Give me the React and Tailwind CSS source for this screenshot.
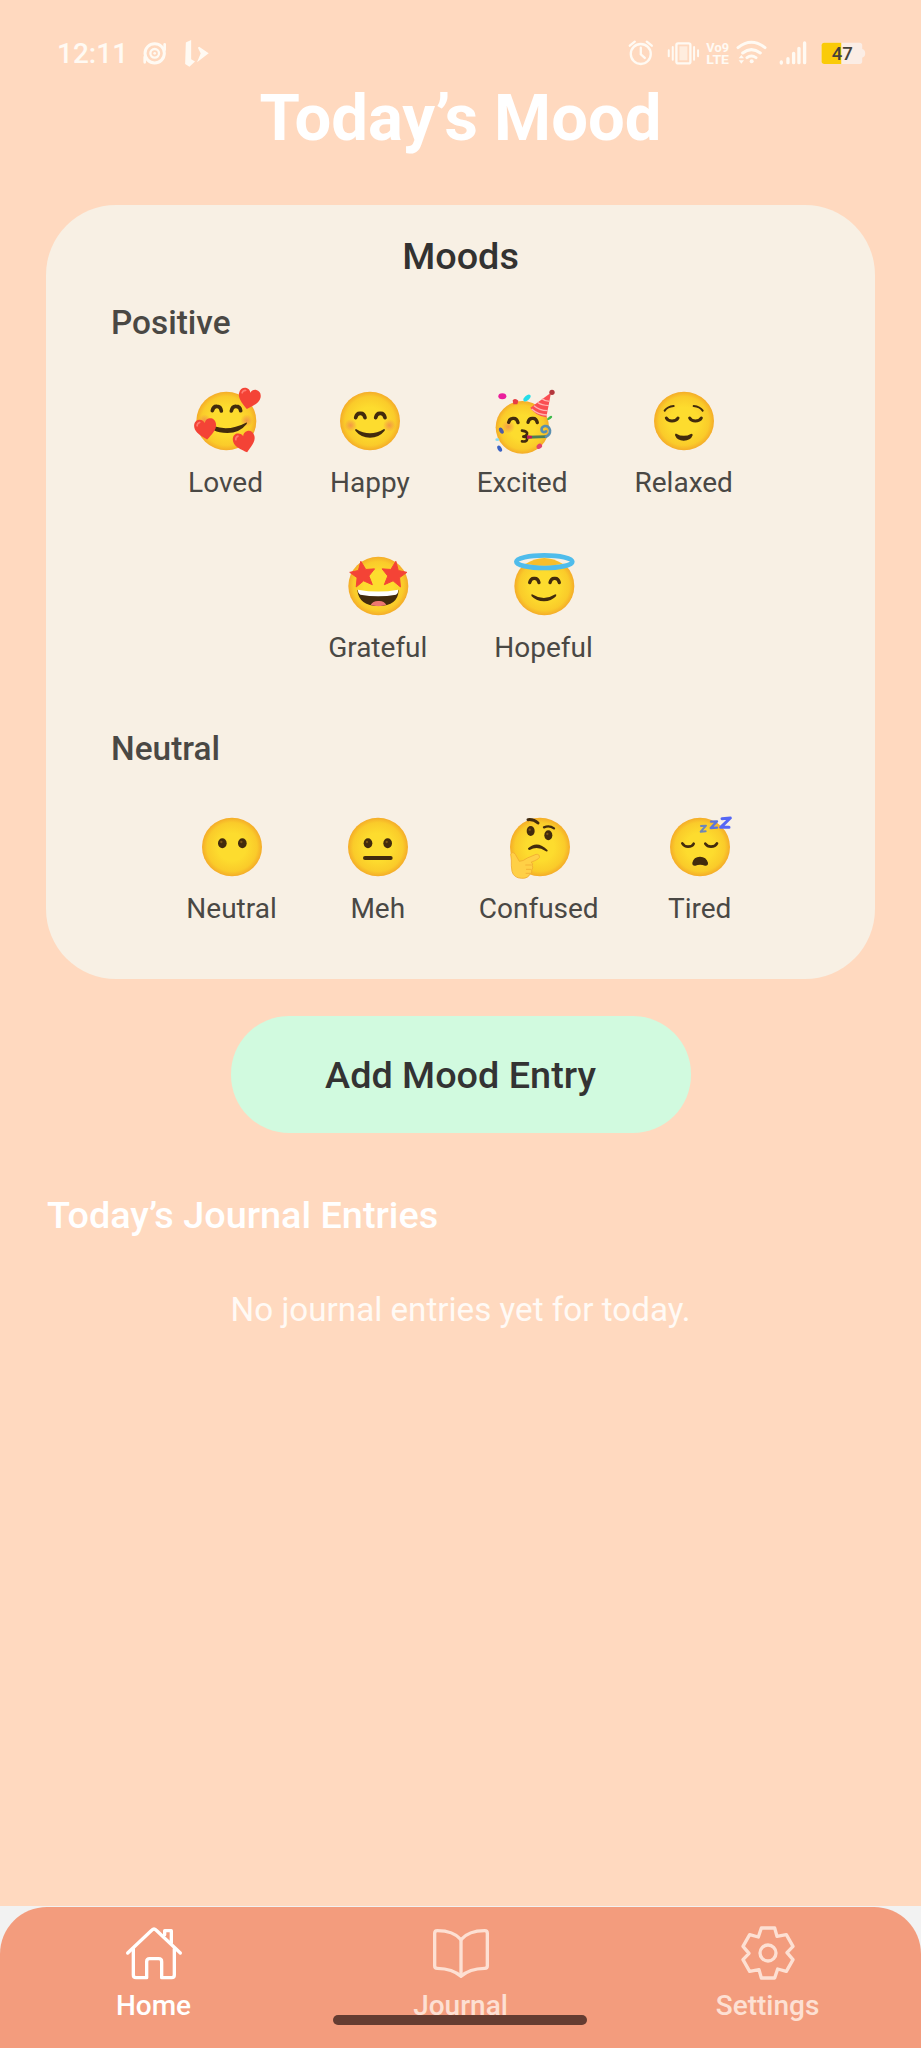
const INK = "#422B0D";

function Face({ cx, cy, rx = 90, ry = 88 }) {
  return <ellipse cx={cx} cy={cy} rx={rx} ry={ry} fill="url(#face)" />;
}

function Stroke({ d, w = 8, color = INK }) {
  return <path d={d} fill="none" stroke={color} strokeWidth={w} strokeLinecap="round" strokeLinejoin="round" />;
}

function Blush({ cx, cy, r = 19 }) {
  return <circle cx={cx} cy={cy} r={r} fill="url(#blush)" />;
}

function Heart({ x, y, rotate, scale = 1 }) {
  return (
    <g transform={`translate(${x} ${y}) rotate(${rotate}) scale(${scale})`}>
      <path
        d="M0 31 C-14 19 -33 6 -33 -11 C-33 -24 -25 -31 -16 -31 C-8 -31 -2 -26 0 -19 C2 -26 8 -31 16 -31 C25 -31 33 -24 33 -11 C33 6 14 19 0 31Z"
        fill="#F44336"
      />
      <path d="M-24 -14 Q-23 -22 -15 -23" fill="none" stroke="#FF7A70" strokeWidth="5" strokeLinecap="round" />
    </g>
  );
}

function Star({ x, y, rotate }) {
  return (
    <path
      transform={`translate(${x} ${y}) rotate(${rotate}) scale(0.94)`}
      d="M0 -42 L12 -14 L40 -12 L19 8 L26 37 L0 21 L-26 37 L-19 8 L-40 -12 L-12 -14Z"
      fill="#F44336"
      stroke="#F44336"
      strokeWidth="3"
      strokeLinejoin="round"
    />
  );
}

function Emoji({ box, children }) {
  return (
    <svg viewBox={box} className="h-[70px] w-[70px] overflow-visible" aria-hidden="true">
      {children}
    </svg>
  );
}

const loved = (
  <Emoji box="89 48 210 210">
    <Face cx={195} cy={153} />
    <Blush cx={256} cy={152} />
    <Blush cx={130} cy={152} />
    <Stroke d="M153 122 Q156 108 167 109 Q178 109 180 123" w={11} />
    <Stroke d="M210 123 Q213 108 224 109 Q236 109 238 122" w={11} />
    <path d="M158 169 Q205 184 254 158 Q259 157 256 162 Q235 189 198 189 Q172 189 158 181Z" fill={INK} />
    <Heart x={263} y={87} rotate={12} scale={1} />
    <Heart x={133} y={178} rotate={-8} scale={1} />
    <Heart x={250} y={217} rotate={-14} scale={1} />
  </Emoji>
);

const happy = (
  <Emoji box="525 48 210 210">
    <Face cx={630} cy={153} />
    <Blush cx={572} cy={166} />
    <Blush cx={688} cy={166} />
    <Stroke d="M587 143 Q590 129 601 130 Q612 129 615 143" w={11} />
    <Stroke d="M647 143 Q650 129 661 130 Q672 129 675 143" w={11} />
    <path d="M588 177 Q630 203 672 177 Q677 177 674 182 Q657 203 630 203 Q603 203 586 182 Q584 177 588 177Z" fill={INK} />
  </Emoji>
);

const excited = (
  <Emoji box="111 48 210 210">
    <Face cx={217} cy={172} rx={80} ry={79} />
    <Blush cx={175} cy={170} r={20} />
    <Stroke d="M176 157 Q179 144 190 145 Q201 144 204 158" w={10} />
    <Stroke d="M234 157 Q237 144 248 145 Q259 144 262 158" w={10} />
    <Stroke d="M216 182 Q234 184 231 192 Q230 198 220 200 Q235 201 231 209 Q228 216 216 214" w={8} />
    <path d="M231 197 L288 196 L288 204 L231 206Z" fill="#4E7D55" />
    <path d="M231 196 L246 198 V205 L231 206Z" fill="#C2185B" />
    <Stroke d="M288 200 Q301 194 300 181 Q297 167 284 168 Q273 171 275 182 Q279 190 288 184" w={8} color="#5A8FB0" />
    <path d="M241 113 Q256 137 289 142 L303 68Z" fill="#FA4E52" />
    <path d="M262 97 Q274 106 297 107 M252 107 Q268 121 293 122 M245 117 Q264 134 291 135 M276 86 Q285 94 299 94" fill="none" stroke="#FFB3B0" strokeWidth="4" />
    <circle cx="306" cy="67" r="8" fill="#B3373C" />
    <ellipse cx="157" cy="79" rx="12" ry="9" fill="#EA1E9C" />
    <ellipse cx="231" cy="84" rx="13" ry="7" transform="rotate(-42 231 84)" fill="#25DDE8" />
    <path d="M188 91 Q196 83 205 92 L202 103 H190Z" fill="#E83D43" />
    <ellipse cx="299" cy="144" rx="9" ry="4" transform="rotate(-35 299 144)" fill="#3DBB4B" />
    <ellipse cx="154" cy="182" rx="6" ry="10" transform="rotate(-30 154 182)" fill="#4B5CA8" />
    <ellipse cx="149" cy="236" rx="6" ry="10" transform="rotate(-30 149 236)" fill="#3B62C4" />
    <ellipse cx="142" cy="209" rx="6" ry="4" fill="#8ADBF0" />
    <ellipse cx="268" cy="229" rx="9" ry="7" transform="rotate(-40 268 229)" fill="#E2436B" />
  </Emoji>
);

const relaxed = (
  <Emoji box="600 48 210 210">
    <Face cx={705} cy={153} />
    <Stroke d="M647 122 Q655 110 674 108" w={6} />
    <Stroke d="M734 108 Q753 110 761 122" w={6} />
    <Stroke d="M652 144 Q657 153 669 153 Q682 153 687 144" w={9} />
    <Stroke d="M722 144 Q727 153 739 153 Q752 153 757 144" w={9} />
    <path d="M682 191 Q704 204 727 191 Q732 191 731 196 Q725 212 704 212 Q684 212 678 196 Q678 190 682 191Z" fill={INK} />
  </Emoji>
);

const grateful = (
  <Emoji box="128 63 210 210">
    <Face cx={234} cy={168} />
    <Star x={187} y={133} rotate={-8} />
    <Star x={281} y={133} rotate={8} />
    <path d="M171 181 Q234 202 295 181 Q293 228 234 228 Q176 228 171 181Z" fill={INK} />
    <path d="M173 179 Q234 190 293 179 Q295 189 287 194 Q234 204 180 194 Q172 189 173 179Z" fill="#fff" />
    <path d="M211 225 Q218 212 235 213 Q251 212 258 225 Q234 232 211 225Z" fill="#ED7770" />
  </Emoji>
);

const hopeful = (
  <Emoji box="624 63 210 210">
    <Face cx={730} cy={168} />
    <ellipse cx="730" cy="94" rx="73" ry="12" fill="#F8F0E4" />
    <path d="M673 102 Q730 66 786 102 Q730 112 673 102Z" fill="#F7BE2B" />
    <ellipse cx="730" cy="95" rx="84" ry="19" fill="none" stroke="#4FBCEB" strokeWidth="14" />
    <Stroke d="M686 158 Q689 144 700 145 Q711 144 714 158" w={10} />
    <Stroke d="M747 158 Q750 144 761 145 Q772 144 775 158" w={10} />
    <path d="M693 193 Q729 215 763 193 Q768 193 765 199 Q751 214 729 214 Q706 214 692 199 Q689 193 693 193Z" fill={INK} />
  </Emoji>
);

function Eye({ cx, cy, rx = 13, ry = 15 }) {
  return (
    <g>
      <ellipse cx={cx} cy={cy} rx={rx} ry={ry} fill={INK} />
      <circle cx={cx - 3} cy={cy - 4} r="3.500" fill="#7A5415" />
    </g>
  );
}

const neutral = (
  <Emoji box="110 36 210 210">
    <Face cx={215} cy={141} />
    <Eye cx={186} cy={130} />
    <Eye cx={246} cy={130} />
  </Emoji>
);

const meh = (
  <Emoji box="551 36 210 210">
    <Face cx={656} cy={141} />
    <Eye cx={626} cy={130} />
    <Eye cx={685} cy={130} />
    <Stroke d="M617 174 H694" w={12} />
  </Emoji>
);

const confused = (
  <Emoji box="162 36 210 210">
    <Face cx={270} cy={141} />
    <Eye cx={242} cy={93} rx={12} />
    <Eye cx={295} cy={106} rx={12} />
    <Stroke d="M234 59 Q251 57 264 69" w={9} />
    <Stroke d="M282 82 Q298 75 312 85" w={7} />
    <path d="M234 145 Q262 119 293 151 Q293 156 288 154 Q262 136 239 150 Q233 150 234 145Z" fill={INK} />
    <path
      d="M182 162 Q188 153 196 163 L208 184 Q219 184 232 174 L258 163 Q270 162 268 173 Q265 178 243 187 Q251 190 247 197 Q251 204 245 210 Q247 217 241 221 Q234 236 215 235 Q191 234 186 214 Q183 198 184 180Z"
      fill="#FFD046"
      stroke="#F1AC30"
      strokeWidth="2.500"
    />
    <path d="M226 195 H245 M228 208 H244 M227 220 H240" stroke="#F1AC30" strokeWidth="2.500" fill="none" />
  </Emoji>
);

const tired = (
  <Emoji box="645 36 210 210">
    <Face cx={750} cy={141} />
    <Stroke d="M697 130 Q703 140 714 140 Q727 140 731 131" w={8} />
    <Stroke d="M766 131 Q772 140 783 140 Q796 140 801 130" w={8} />
    <path d="M727 188 Q731 170 750 170 Q769 170 774 188 Q775 198 765 197 Q750 192 736 197 Q726 198 727 188Z" fill={INK} />
    <Stroke d="M753 78 L768 77 L752 95 L767 94" w={6} color="#6E86B8" />
    <Stroke d="M783 65 L801 64 L782 84 L801 83" w={7} color="#5C74DC" />
    <Stroke d="M816 56 L841 54 L812 82 L837 82" w={9} color="#5566F5" />
  </Emoji>
);

const positiveRows = [
  [
    { label: "Loved", art: loved },
    { label: "Happy", art: happy },
    { label: "Excited", art: excited },
    { label: "Relaxed", art: relaxed },
  ],
  [
    { label: "Grateful", art: grateful },
    { label: "Hopeful", art: hopeful },
  ],
];

const neutralRow = [
  { label: "Neutral", art: neutral },
  { label: "Meh", art: meh },
  { label: "Confused", art: confused },
  { label: "Tired", art: tired },
];

function MoodRow({ moods, gap = "gap-[67px]" }) {
  return (
    <div className={`flex justify-center ${gap}`}>
      {moods.map((m) => (
        <button key={m.label} className="flex flex-col items-center gap-[10px]">
          {m.art}
          <span className="text-[28px] leading-[33px] text-[#4a4844]">{m.label}</span>
        </button>
      ))}
    </div>
  );
}

function StatusBar() {
  return (
    <div className="flex h-[80px] items-center pt-[27px] pr-[42px] pl-[57px] text-[#fffaf3]">
      <span className="w-[71px] text-[28px] leading-[33px] font-medium">12:11</span>
      <svg viewBox="390 50 270 100" className="ml-[2px] h-[33.300px] w-[90px]" fill="none" stroke="currentColor" aria-hidden="true">
        <circle cx="464" cy="99" r="29" strokeWidth="9" />
        <circle cx="464" cy="99" r="13" strokeWidth="7" />
        <circle cx="464" cy="99" r="4" fill="currentColor" stroke="none" />
        <path d="M434 110 V126 M494 88 V72" strokeWidth="8" strokeLinecap="round" />
        <path d="M560 68 L571 63 V118 L581 124 L568 136 L558 130Z" fill="currentColor" strokeWidth="5" />
        <path d="M596 81 L622 99 L597 118 L605 99Z" fill="currentColor" strokeWidth="5" />
      </svg>
      <svg viewBox="60 50 780 100" className="ml-auto h-[33.300px] w-[260px]" fill="none" stroke="currentColor" aria-hidden="true">
        <circle cx="125" cy="101" r="30" strokeWidth="7" />
        <path d="M125 82 V102 L137 113 M92 76 L107 64 M143 64 L158 76" strokeWidth="7" strokeLinecap="round" />
        <rect x="232" y="69" width="42" height="60" rx="5" strokeWidth="7" />
        <rect x="241" y="78" width="24" height="42" fill="currentColor" fillOpacity="0.6" stroke="none" />
        <path d="M221 80 V118 M285 80 V118 M209 90 V108 M297 90 V108" strokeWidth="6" strokeLinecap="round" />
        <g fill="currentColor" stroke="none" fontFamily="Roboto, sans-serif" fontWeight="700">
          <text x="322" y="94" fontSize="36" textLength="68" lengthAdjust="spacingAndGlyphs">Vo9</text>
          <text x="322" y="132" fontSize="40" textLength="68" lengthAdjust="spacingAndGlyphs">LTE</text>
        </g>
        <path d="M417 82 Q457 50 498 82 M431 98 Q457 78 484 98 M444 112 Q457 102 471 112" strokeWidth="9" strokeLinecap="round" />
        <circle cx="458" cy="123" r="6" fill="currentColor" stroke="none" />
        <path d="M427 104 L435 114 H419Z M427 130 L435 120 H419Z" fill="currentColor" stroke="none" />
        <path d="M547 125 V128 M567 115 V127 M584 99 V127 M600 84 V127 M617 68 V127" strokeWidth="10" strokeLinecap="round" />
        <path d="M676 67 H782 Q790 67 790 75 V86 Q799 88 799 99 Q799 110 790 112 V123 Q790 131 782 131 H676 Q668 131 668 123 V75 Q668 67 676 67Z" fill="#FBEDE5" stroke="none" />
        <path d="M727 67 H676 Q668 67 668 75 V123 Q668 131 676 131 H727Z" fill="#FACB08" stroke="none" />
        <text x="730" y="119" textAnchor="middle" fontSize="56" fontWeight="500" fontFamily="Roboto, sans-serif" fill="#46433a" stroke="none">47</text>
      </svg>
    </div>
  );
}

const GEAR =
  "M-20 -75 L20 -75 L27 -50 L55 -55 L75 -20 L57 -1 L75 20 L55 55 L29 48 L20 75 L-20 75 L-27 50 L-55 55 L-75 20 L-57 1 L-75 -20 L-55 -55 L-29 -48Z";

function TabIcon({ box, children }) {
  return (
    <svg viewBox={box} className="h-[60px] w-[60px]" fill="none" stroke="currentColor" strokeWidth="10" strokeLinecap="round" strokeLinejoin="round" aria-hidden="true">
      {children}
    </svg>
  );
}

const tabs = [
  {
    label: "Home",
    color: "text-white",
    icon: (
      <TabIcon box="369 98 180 180">
        <path d="M380 188 L453 119 Q459 113 465 119 L538 188" />
        <path d="M397 176 V254 Q397 262 405 262 H437 V214 Q437 205 446 205 H473 Q482 205 482 214 V262 H512 Q520 262 520 254 V176" />
        <path d="M491 133 V121 H511 V157" />
      </TabIcon>
    ),
  },
  {
    label: "Journal",
    color: "text-[#fde0d3]",
    icon: (
      <TabIcon box="1291 98 180 180">
        <path d="M1381 148 Q1358 121 1310 121 Q1302 121 1302 129 V227 Q1302 234 1310 234 Q1356 235 1381 258 Q1406 235 1452 234 Q1460 234 1460 227 V129 Q1460 121 1452 121 Q1404 121 1381 148Z" />
        <path d="M1381 148 V256" />
      </TabIcon>
    ),
  },
  {
    label: "Settings",
    color: "text-[#fde0d3]",
    icon: (
      <TabIcon box="-90 -90 180 180">
        <path d={GEAR} />
        <circle r="24" />
      </TabIcon>
    ),
  },
];

export default function App() {
  return (
    <div className="relative flex h-[2048px] w-[921px] flex-col overflow-hidden bg-[#ffd9bf] font-[Roboto,sans-serif]">
      <svg className="absolute h-0 w-0" aria-hidden="true">
        <defs>
          <radialGradient id="face" cx="50%" cy="50%" r="52%">
            <stop offset="0.45" stopColor="#FDDC2E" />
            <stop offset="0.8" stopColor="#FACB2A" />
            <stop offset="1" stopColor="#F3A428" />
          </radialGradient>
          <radialGradient id="blush">
            <stop offset="0" stopColor="#F08A4B" stopOpacity="0.8" />
            <stop offset="1" stopColor="#F08A4B" stopOpacity="0" />
          </radialGradient>
        </defs>
      </svg>

      <StatusBar />
      <h1 className="text-center text-[65.200px] leading-[76px] font-bold text-white">Today’s Mood</h1>

      <main className="flex flex-1 flex-col px-[46px] pt-[49px]">
        <section className="h-[773.500px] rounded-[70px] bg-[#f8f0e4] pt-[29px]">
          <h2 className="text-center text-[37.800px] leading-[44px] font-medium text-[#333231]">Moods</h2>
          <h3 className="mt-[26px] pl-[65px] text-[33.400px] leading-[38px] font-medium text-[#4a4844]">Positive</h3>
          <div className="mt-[44px] flex flex-col gap-[52px]">
            {positiveRows.map((row) => (
              <MoodRow key={row[0].label} moods={row} />
            ))}
          </div>
          <h3 className="mt-[66px] mb-[44px] pl-[65px] text-[33.400px] leading-[38px] font-medium text-[#4a4844]">Neutral</h3>
          <MoodRow moods={neutralRow} gap="gap-[66px]" />
        </section>

        <button className="mt-[37.500px] h-[117px] w-[460px] self-center rounded-[58px] bg-[#d1fadf] text-[37.800px] leading-[44px] font-medium text-[#333]">
          Add Mood Entry
        </button>

        <h2 className="mt-[60px] pl-px text-[37.800px] leading-[44px] font-medium text-white">Today’s Journal Entries</h2>
        <p className="mt-[54px] text-center text-[33.200px] leading-[38px] text-[#fffaf5]">No journal entries yet for today.</p>
      </main>

      <div className="bg-[#f2f2f2] pt-px">
        <nav className="grid h-[141px] grid-cols-3 rounded-t-[47px] bg-[#f39c7d] pt-[16px]">
          {tabs.map((t) => (
            <a key={t.label} className={`flex flex-col items-center gap-[6px] ${t.color}`}>
              {t.icon}
              <span className="text-[28px] leading-[33px] font-medium">{t.label}</span>
            </a>
          ))}
        </nav>
      </div>
      <div className="absolute bottom-[23px] left-[333px] h-[10px] w-[254px] rounded-full bg-[#643c31]" />
    </div>
  );
}
